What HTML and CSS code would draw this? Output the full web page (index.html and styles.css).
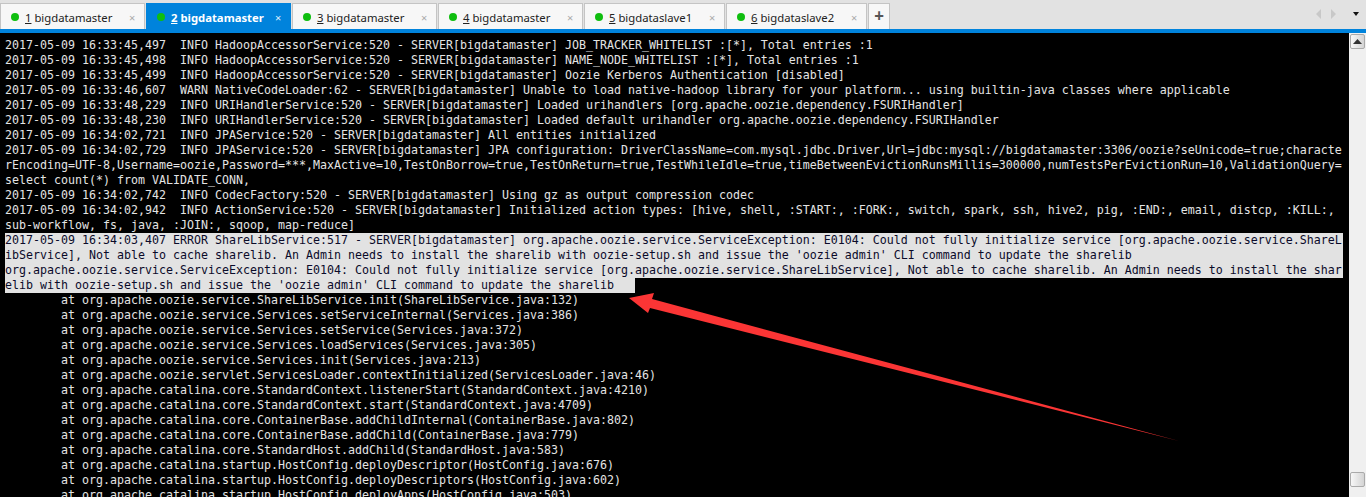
FILE: index.html
```html
<!DOCTYPE html>
<html lang="en">
<head>
<meta charset="utf-8">
<title>Xshell</title>
<link rel="stylesheet" href="styles.css">
</head>
<body>
<div class="tabbar">
  <div class="tab w145"><i class="dot"></i><span class="label"><u>1</u> bigdatamaster</span><span class="close">×</span></div>
  <div class="tab w145 active"><i class="dot"></i><span class="label"><u>2</u> bigdatamaster</span><span class="close">×</span></div>
  <div class="tab w145"><i class="dot"></i><span class="label"><u>3</u> bigdatamaster</span><span class="close">×</span></div>
  <div class="tab w145"><i class="dot"></i><span class="label"><u>4</u> bigdatamaster</span><span class="close">×</span></div>
  <div class="tab w141"><i class="dot"></i><span class="label"><u>5</u> bigdataslave1</span><span class="close">×</span></div>
  <div class="tab w141"><i class="dot"></i><span class="label"><u>6</u> bigdataslave2</span><span class="close">×</span></div>
  <div class="tab plus">+</div>
  <div class="nav">
    <svg width="20" height="10" viewBox="0 0 20 10"><path d="M5 0V10L0 5Z M15 0V10L20 5Z" fill="#c8c8c8"/></svg>
    <svg class="menu" width="6" height="4" viewBox="0 0 6 4"><path d="M0 0H6L3 4Z" fill="#111"/></svg>
  </div>
</div>
<div class="strip"></div>
<div class="main">
<div class="term">
<div class="ln">2017-05-09 16:33:45,497  INFO HadoopAccessorService:520 - SERVER[bigdatamaster] JOB_TRACKER_WHITELIST :[*], Total entries :1</div>
<div class="ln">2017-05-09 16:33:45,498  INFO HadoopAccessorService:520 - SERVER[bigdatamaster] NAME_NODE_WHITELIST :[*], Total entries :1</div>
<div class="ln">2017-05-09 16:33:45,499  INFO HadoopAccessorService:520 - SERVER[bigdatamaster] Oozie Kerberos Authentication [disabled]</div>
<div class="ln">2017-05-09 16:33:46,607  WARN NativeCodeLoader:62 - SERVER[bigdatamaster] Unable to load native-hadoop library for your platform... using builtin-java classes where applicable</div>
<div class="ln">2017-05-09 16:33:48,229  INFO URIHandlerService:520 - SERVER[bigdatamaster] Loaded urihandlers [org.apache.oozie.dependency.FSURIHandler]</div>
<div class="ln">2017-05-09 16:33:48,230  INFO URIHandlerService:520 - SERVER[bigdatamaster] Loaded default urihandler org.apache.oozie.dependency.FSURIHandler</div>
<div class="ln">2017-05-09 16:34:02,721  INFO JPAService:520 - SERVER[bigdatamaster] All entities initialized</div>
<div class="ln">2017-05-09 16:34:02,729  INFO JPAService:520 - SERVER[bigdatamaster] JPA configuration: DriverClassName=com.mysql.jdbc.Driver,Url=jdbc:mysql://bigdatamaster:3306/oozie?seUnicode=true;characte</div>
<div class="ln">rEncoding=UTF-8,Username=oozie,Password=***,MaxActive=10,TestOnBorrow=true,TestOnReturn=true,TestWhileIdle=true,timeBetweenEvictionRunsMillis=300000,numTestsPerEvictionRun=10,ValidationQuery=</div>
<div class="ln">select count(*) from VALIDATE_CONN,</div>
<div class="ln">2017-05-09 16:34:02,742  INFO CodecFactory:520 - SERVER[bigdatamaster] Using gz as output compression codec</div>
<div class="ln">2017-05-09 16:34:02,942  INFO ActionService:520 - SERVER[bigdatamaster] Initialized action types: [hive, shell, :START:, :FORK:, switch, spark, ssh, hive2, pig, :END:, email, distcp, :KILL:,</div>
<div class="ln">sub-workflow, fs, java, :JOIN:, sqoop, map-reduce]</div>
<div class="ln sel">2017-05-09 16:34:03,407 ERROR ShareLibService:517 - SERVER[bigdatamaster] org.apache.oozie.service.ServiceException: E0104: Could not fully initialize service [org.apache.oozie.service.ShareL</div>
<div class="ln sel">ibService], Not able to cache sharelib. An Admin needs to install the sharelib with oozie-setup.sh and issue the 'oozie admin' CLI command to update the sharelib</div>
<div class="ln sel">org.apache.oozie.service.ServiceException: E0104: Could not fully initialize service [org.apache.oozie.service.ShareLibService], Not able to cache sharelib. An Admin needs to install the shar</div>
<div class="ln"><span class="sel-end">elib with oozie-setup.sh and issue the 'oozie admin' CLI command to update the sharelib   </span></div>
<div class="ln">        at org.apache.oozie.service.ShareLibService.init(ShareLibService.java:132)</div>
<div class="ln">        at org.apache.oozie.service.Services.setServiceInternal(Services.java:386)</div>
<div class="ln">        at org.apache.oozie.service.Services.setService(Services.java:372)</div>
<div class="ln">        at org.apache.oozie.service.Services.loadServices(Services.java:305)</div>
<div class="ln">        at org.apache.oozie.service.Services.init(Services.java:213)</div>
<div class="ln">        at org.apache.oozie.servlet.ServicesLoader.contextInitialized(ServicesLoader.java:46)</div>
<div class="ln">        at org.apache.catalina.core.StandardContext.listenerStart(StandardContext.java:4210)</div>
<div class="ln">        at org.apache.catalina.core.StandardContext.start(StandardContext.java:4709)</div>
<div class="ln">        at org.apache.catalina.core.ContainerBase.addChildInternal(ContainerBase.java:802)</div>
<div class="ln">        at org.apache.catalina.core.ContainerBase.addChild(ContainerBase.java:779)</div>
<div class="ln">        at org.apache.catalina.core.StandardHost.addChild(StandardHost.java:583)</div>
<div class="ln">        at org.apache.catalina.startup.HostConfig.deployDescriptor(HostConfig.java:676)</div>
<div class="ln">        at org.apache.catalina.startup.HostConfig.deployDescriptors(HostConfig.java:602)</div>
<div class="ln">        at org.apache.catalina.startup.HostConfig.deployApps(HostConfig.java:503)</div>
<svg class="arrow" width="1366" height="497" viewBox="0 0 1366 497"><path d="M629 298L654 293L652 299L1179 441L650 308L648 313Z" fill="#fb3535"/></svg>
</div>
<div class="scroll">
  <div class="sbtn"><svg width="9" height="5" viewBox="0 0 9 5"><path d="M4.500 0L9 5H0Z" fill="#333"/></svg></div>
  <div class="thumb"></div>
</div>
</div>
</body>
</html>
```
FILE: styles.css
```css
html, body { margin: 0; padding: 0; height: 497px; overflow: hidden; background: #000; }
.tabbar { height: 26px; padding-top: 3px; background: #e2e2e2; display: flex; gap: 1px; font-family: "Noto Sans", "Open Sans", sans-serif; font-size: 11.2px; color: #222; }
.tab { box-sizing: border-box; height: 26px; background: #f7f7f7; border: 1px solid #c4c4c4; border-bottom: 0; display: flex; align-items: center; padding: 1px 0 0 10px; }
.w145 { width: 145px; }
.w141 { width: 141px; }
.tab.active { background: #0083dc; border-color: #0083dc; color: #fff; font-weight: 700; }
.dot { width: 8px; height: 8px; border-radius: 50%; background: #0fbe0f; margin-right: 6px; flex: none; }
.label { flex: 1; white-space: pre; font-size: 11.3px; }
.close { color: #aaa; font-size: 11px; width: 15px; flex: none; }
.tab.active .close { color: #dcefff; font-weight: 400; }
.plus { width: 22px; padding: 0 0 2px; justify-content: center; font-size: 17px; font-weight: 700; color: #555; }
.nav { margin-left: auto; display: flex; align-items: center; gap: 17px; padding-right: 7px; padding-bottom: 4px; }
.strip { height: 4px; background: #0083dc; }
.main { display: flex; height: 464px; overflow: hidden; }
.term { flex: 1; background: #000; color: #e4e4e4; font-family: "DejaVu Sans Mono", monospace; font-size: 11.63px; line-height: 15px; padding: 5px 0 0 5px; overflow: hidden; min-width: 0; }
.ln { white-space: pre; height: 15px; }
.sel { background: #e2e2e2; color: #0b0b2a; margin-right: 6px; }
.sel-end { background: #e2e2e2; color: #0b0b2a; display: inline-block; }
.arrow { position: absolute; left: 0; top: 0; }
.scroll { width: 17px; flex: none; background: #f0f0f0; display: flex; flex-direction: column; justify-content: space-between; align-items: center; padding: 1px 0 10px; box-sizing: border-box; }
.sbtn, .thumb { box-sizing: border-box; width: 15px; height: 15px; border: 1px solid #aaa; border-radius: 2px; background: linear-gradient(90deg, #f7f7f7, #d4d4d4); }
.sbtn { display: flex; align-items: center; justify-content: center; }
```
